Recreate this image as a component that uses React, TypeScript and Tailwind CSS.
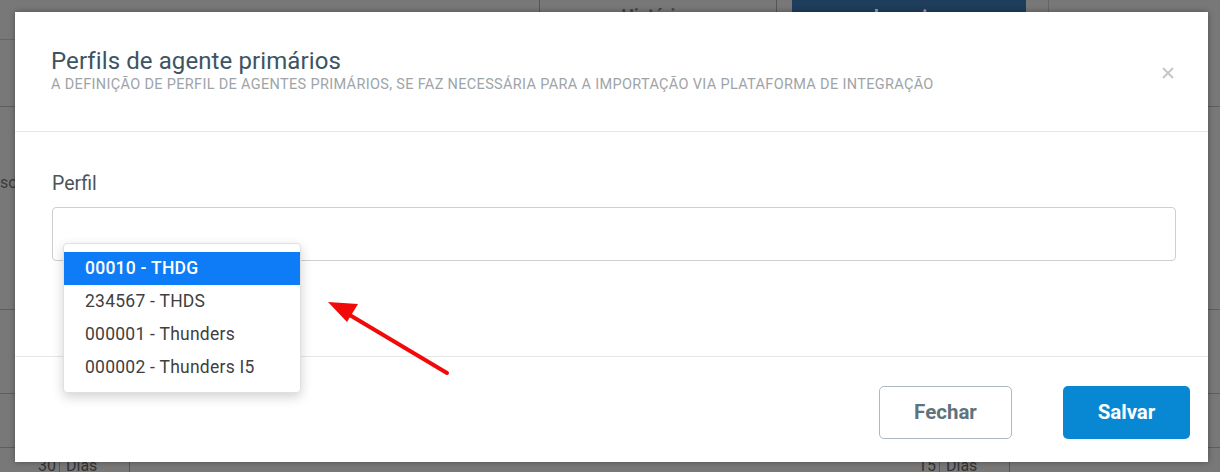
const options = [
  { label: '00010 - THDG', active: true },
  { label: '234567 - THDS', active: false },
  { label: '000001 - Thunders', active: false },
  { label: '000002 - Thunders I5', active: false },
];

function Backdrop() {
  return (
    <div className="flex h-full flex-col bg-[#787878] text-[#3a3a3a]">
      <div className="flex h-[40px] shrink-0">
        <div className="w-[539px] border-b border-[#666]" />
        <div className="flex w-[238px] justify-center border-x border-[#555] pt-[2px] text-[18px] font-bold text-[#444]">Histórico</div>
        <div className="w-[15px]" />
        <div className="flex w-[234px] justify-center bg-[#1f3d5c] pt-[2px] text-[18px] font-bold text-[#9aa8b6]">Importar</div>
        <div className="w-[23px] border-r border-[#666]" />
      </div>
      <div className="flex flex-1 flex-col">
        <div className="h-[67px] border-b border-[#5e5e5e]" />
        <div className="pt-[64px] pl-0 text-[16px] text-[#3c3c3c]">so</div>
        <div className="h-[115px] border-b border-[#5e5e5e]" />
        <div className="h-[84px] border-b border-[#5e5e5e]" />
        <div className="h-[54px] border-b border-[#5e5e5e]" />
      </div>
      <div className="flex h-[16px] shrink-0 items-start text-[16px] leading-[20px] text-[#333]">
        <div className="ml-[35px] w-[25px] border-r border-[#555] text-right pr-[3px]">30</div>
        <div className="w-[70px] border-r border-[#555] pl-[6px]">Dias</div>
        <div className="w-[117px] border-r border-[#555]" />
        <div className="ml-[668px] w-[25px] border-r border-[#555] text-right pr-[3px]">15</div>
        <div className="w-[70px] border-r border-[#555] pl-[6px]">Dias</div>
        <div className="w-[60px] border-r border-[#555]" />
      </div>
    </div>
  );
}

function Arrow() {
  return (
    <svg className="pointer-events-none absolute left-0 top-0" width="1193" height="450" viewBox="0 0 1193 450">
      <line x1="432" y1="361" x2="328" y2="299" stroke="#f00a0a" strokeWidth="4" strokeLinecap="round" />
      <polygon points="313,290 343,292 332,310" fill="#f00a0a" />
    </svg>
  );
}

export default function App() {
  return (
    <div className="relative h-[472px] w-full overflow-hidden" style={{ fontFamily: 'Roboto, "Liberation Sans", sans-serif' }}>
      <Backdrop />
      <div className="absolute left-[15px] top-[12px] flex h-[450px] w-[1193px] flex-col bg-white shadow-[0_0_6px_rgba(0,0,0,0.35)]">
        <div className="flex h-[120px] shrink-0 items-start justify-between border-b border-[#e6e6e6] pl-[36px] pr-[34px] pt-[34px]">
          <div>
            <h2 className="text-[24px] leading-[30px] tracking-[0.1px] text-[#3d5462]">Perfils de agente primários</h2>
            <p className="text-[14.5px] leading-[18px] tracking-[0.33px] text-[#9ea4a8]">
              A DEFINIÇÃO DE PERFIL DE AGENTES PRIMÁRIOS, SE FAZ NECESSÁRIA PARA A IMPORTAÇÃO VIA PLATAFORMA DE INTEGRAÇÃO
            </p>
          </div>
          <svg className="mt-[21px]" width="12" height="12" viewBox="0 0 12 12">
            <path d="M1 1 L11 11 M11 1 L1 11" stroke="#c7c7c7" strokeWidth="2" />
          </svg>
        </div>
        <div className="h-[225px] shrink-0 border-b border-[#e6e6e6] px-[37px] pt-[40px]">
          <label className="block text-[19.5px] leading-[24px] text-[#4a545b]">Perfil</label>
          <div className="relative mt-[11px] h-[54px] w-[1124px] rounded-[4px] border border-[#cfcfcf]">
            <ul className="absolute left-[10px] top-[35px] z-10 w-[238px] rounded-[4px] border border-[#e0e0e0] bg-white py-[8px] shadow-[0_4px_12px_rgba(0,0,0,0.18)]">
              {options.map((o) => (
                <li
                  key={o.label}
                  className={`h-[33px] pl-[21px] text-[17.5px] leading-[33px] tracking-[0.25px] ${o.active ? 'bg-[#0f7cf7] font-medium text-white' : 'text-[#3f3f3f]'}`}
                >
                  {o.label}
                </li>
              ))}
            </ul>
          </div>
        </div>
        <div className="flex flex-1 items-start justify-end gap-[51px] pr-[18px] pt-[29px]">
          <button className="h-[53px] w-[133px] rounded-[5px] border border-[#aabbc3] bg-white text-[20.5px] font-bold text-[#5f737e]">
            Fechar
          </button>
          <button className="h-[53px] w-[127px] rounded-[5px] bg-[#0888d3] text-[20.5px] font-bold text-white">Salvar</button>
        </div>
        <Arrow />
      </div>
    </div>
  );
}
